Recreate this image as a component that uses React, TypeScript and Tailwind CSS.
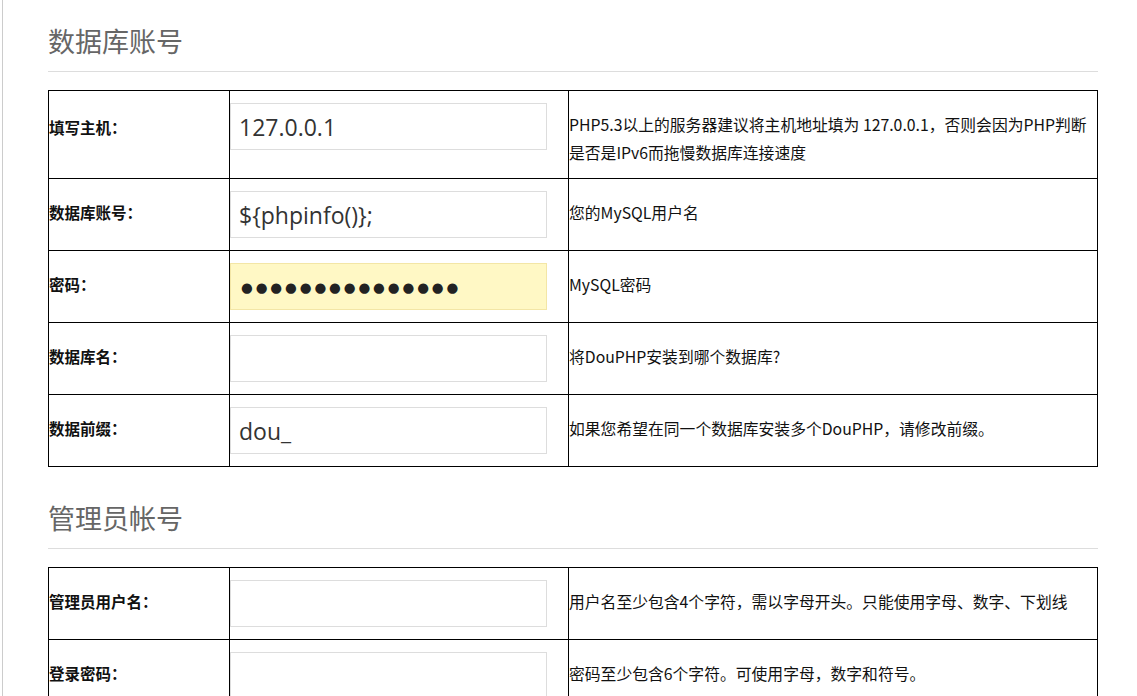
import React from "react";

type Row = {
  label: string;
  value?: string;
  kind?: "text" | "password";
  desc: React.ReactNode;
  tall?: boolean;
};

const dbRows: Row[] = [
  {
    label: "填写主机：",
    value: "127.0.0.1",
    desc: (
      <>
        PHP5.3以上的服务器建议将主机地址填为 127.0.0.1，否则会因为PHP判断
        <br />
        是否是IPv6而拖慢数据库连接速度
      </>
    ),
    tall: true,
  },
  { label: "数据库账号：", value: "${phpinfo()};", desc: "您的MySQL用户名" },
  { label: "密码：", kind: "password", desc: "MySQL密码" },
  { label: "数据库名：", value: "", desc: "将DouPHP安装到哪个数据库?" },
  { label: "数据前缀：", value: "dou_", desc: "如果您希望在同一个数据库安装多个DouPHP，请修改前缀。" },
];

const adminRows: Row[] = [
  { label: "管理员用户名：", value: "", desc: "用户名至少包含4个字符，需以字母开头。只能使用字母、数字、下划线" },
  { label: "登录密码：", value: "", desc: "密码至少包含6个字符。可使用字母，数字和符号。" },
];

function SectionHeader({ title }: { title: string }) {
  return (
    <div className="h-[72px] w-[1050px] border-b border-[#dddddd] pt-[23px]">
      <h2 className="text-[27px] leading-[36px] font-normal text-[#666666] font-['Noto_Sans_CJK_SC',sans-serif]">
        {title}
      </h2>
    </div>
  );
}

function FormTable({ rows, className }: { rows: Row[]; className?: string }) {
  return (
    <div
      className={
        "grid w-[1050px] grid-cols-[181px_339px_529px] border-t border-l border-black " +
        (className ?? "")
      }
    >
      {rows.map((r, i) => (
        <React.Fragment key={i}>
          <div
            className={
              "flex items-center border-r border-b border-black text-[15.5px] font-bold text-[#111111] font-['Noto_Sans_CJK_SC',sans-serif] " +
              (r.tall ? "h-[88px] pb-[14px]" : "h-[72px] pb-[4px]")
            }
          >
            {r.label}
          </div>
          <div
            className={
              "flex items-start border-r border-b border-black pt-[12px] " +
              (r.tall ? "h-[88px]" : "h-[72px]")
            }
          >
            {r.kind === "password" ? (
              <div className="flex h-[47px] w-[317px] items-center border border-[#f3e6a6] bg-[#fff8c5] pl-[10px] pt-[2px] text-[13.5px] tracking-[2.9px] text-[#222222] font-['DejaVu_Sans',sans-serif]">
                ●●●●●●●●●●●●●●●
              </div>
            ) : (
              <input
                type="text"
                defaultValue={r.value}
                className="h-[47px] w-[317px] border border-[#dddddd] bg-white px-[8px] text-[23px] text-[#333333] outline-none font-['Open_Sans','Noto_Sans_CJK_SC',sans-serif]"
              />
            )}
          </div>
          <div
            className={
              "flex items-center border-r border-b border-black text-[15.8px] leading-[28px] text-[#111111] font-['Noto_Sans_CJK_SC',sans-serif] " +
              (r.tall ? "h-[88px] pt-[8px]" : "h-[72px] pb-[4px]")
            }
          >
            <div>{r.desc}</div>
          </div>
        </React.Fragment>
      ))}
    </div>
  );
}

export default function App() {
  return (
    <div className="h-[696px] w-full overflow-hidden bg-white">
      <div className="ml-[2px] min-h-[696px] border-l border-[#cccccc] pl-[45px]">
        <SectionHeader title="数据库账号" />
        <FormTable rows={dbRows} className="mt-[18px] mb-[10px]" />
        <SectionHeader title="管理员帐号" />
        <FormTable rows={adminRows} className="mt-[18px]" />
      </div>
    </div>
  );
}
